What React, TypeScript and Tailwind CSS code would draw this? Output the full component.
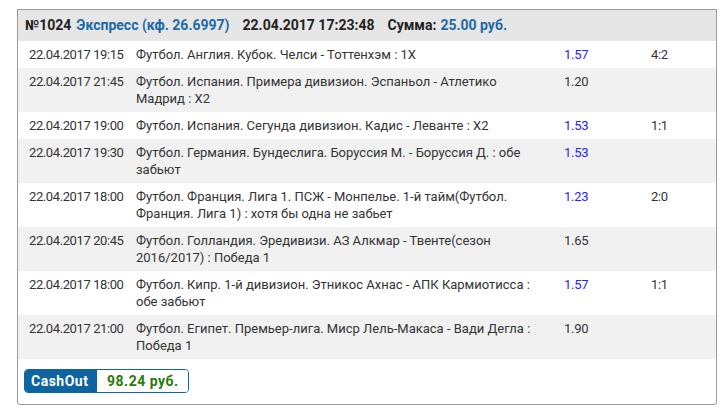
import React from "react";

type Row = { date: string; desc: string; coef: string; blue: boolean; score: string };

const rows: Row[] = [
  { date: "22.04.2017 19:15", desc: "Футбол. Англия. Кубок. Челси - Тоттенхэм : 1X", coef: "1.57", blue: true, score: "4:2" },
  { date: "22.04.2017 21:45", desc: "Футбол. Испания. Примера дивизион. Эспаньол - Атлетико Мадрид : X2", coef: "1.20", blue: false, score: "" },
  { date: "22.04.2017 19:00", desc: "Футбол. Испания. Сегунда дивизион. Кадис - Леванте : X2", coef: "1.53", blue: true, score: "1:1" },
  { date: "22.04.2017 19:30", desc: "Футбол. Германия. Бундеслига. Боруссия М. - Боруссия Д. : обе забьют", coef: "1.53", blue: true, score: "" },
  { date: "22.04.2017 18:00", desc: "Футбол. Франция. Лига 1. ПСЖ - Монпелье. 1-й тайм(Футбол. Франция. Лига 1) : хотя бы одна не забьет", coef: "1.23", blue: true, score: "2:0" },
  { date: "22.04.2017 20:45", desc: "Футбол. Голландия. Эредивизи. АЗ Алкмар - Твенте(сезон 2016/2017) : Победа 1", coef: "1.65", blue: false, score: "" },
  { date: "22.04.2017 18:00", desc: "Футбол. Кипр. 1-й дивизион. Этникос Ахнас - АПК Кармиотисса : обе забьют", coef: "1.57", blue: true, score: "1:1" },
  { date: "22.04.2017 21:00", desc: "Футбол. Египет. Премьер-лига. Миср Лель-Макаса - Вади Дегла : Победа 1", coef: "1.90", blue: false, score: "" },
];

export default function App() {
  return (
    <div
      className="bg-white w-[727px] h-[414px] pt-[9px] pl-[17px] text-[13px] leading-[17px] text-[#333333]"
      style={{ fontFamily: "Roboto, 'Liberation Sans', sans-serif" }}
    >
      <div className="w-[700px] border border-[#9a9a9a] rounded-b-[3px] bg-white">
        <div className="h-[31px] bg-[#e6e6e6] flex items-center pl-[7px] font-bold text-[14px] text-[#222222] whitespace-nowrap">
          <span>№1024</span>
          <span className="ml-[5px] text-[#1c6aa6]">Экспресс (кф. 26.6997)</span>
          <span className="ml-[13px]">22.04.2017 17:23:48</span>
          <span className="ml-[13px]">Сумма:</span>
          <span className="ml-[4px] text-[#1c6aa6]">25.00 руб.</span>
        </div>
        {rows.map((r, i) => (
          <div key={i} className={`flex py-[5px] ${i % 2 === 1 ? "bg-[#f1f1f1]" : "bg-white"}`}>
            <div className="w-[113px] pl-[11px] shrink-0 whitespace-nowrap tracking-[-0.4px]">{r.date}</div>
            <div className="w-[428px] pl-[5px] pr-[22px] shrink-0">{r.desc}</div>
            <div className={`w-[87px] pl-[5px] shrink-0 tracking-[-0.3px] ${r.blue ? "text-[#2424ff]" : ""}`}>{r.coef}</div>
            <div className="pl-[5px] tracking-[-0.3px]">{r.score}</div>
          </div>
        ))}
        <div className="pt-[10px] pb-[11px] pl-[6px]">
          <div className="flex w-[165px] h-[24px] rounded-[4px] border border-[#0d64a0] overflow-hidden font-bold text-[14px] tracking-[0.5px]">
            <div className="w-[72px] bg-[#0d64a0] text-white flex items-center pl-[6px]">CashOut</div>
            <div className="flex-1 bg-white text-[#2a7a0a] flex items-center pl-[10px]">98.24 руб.</div>
          </div>
        </div>
      </div>
    </div>
  );
}
